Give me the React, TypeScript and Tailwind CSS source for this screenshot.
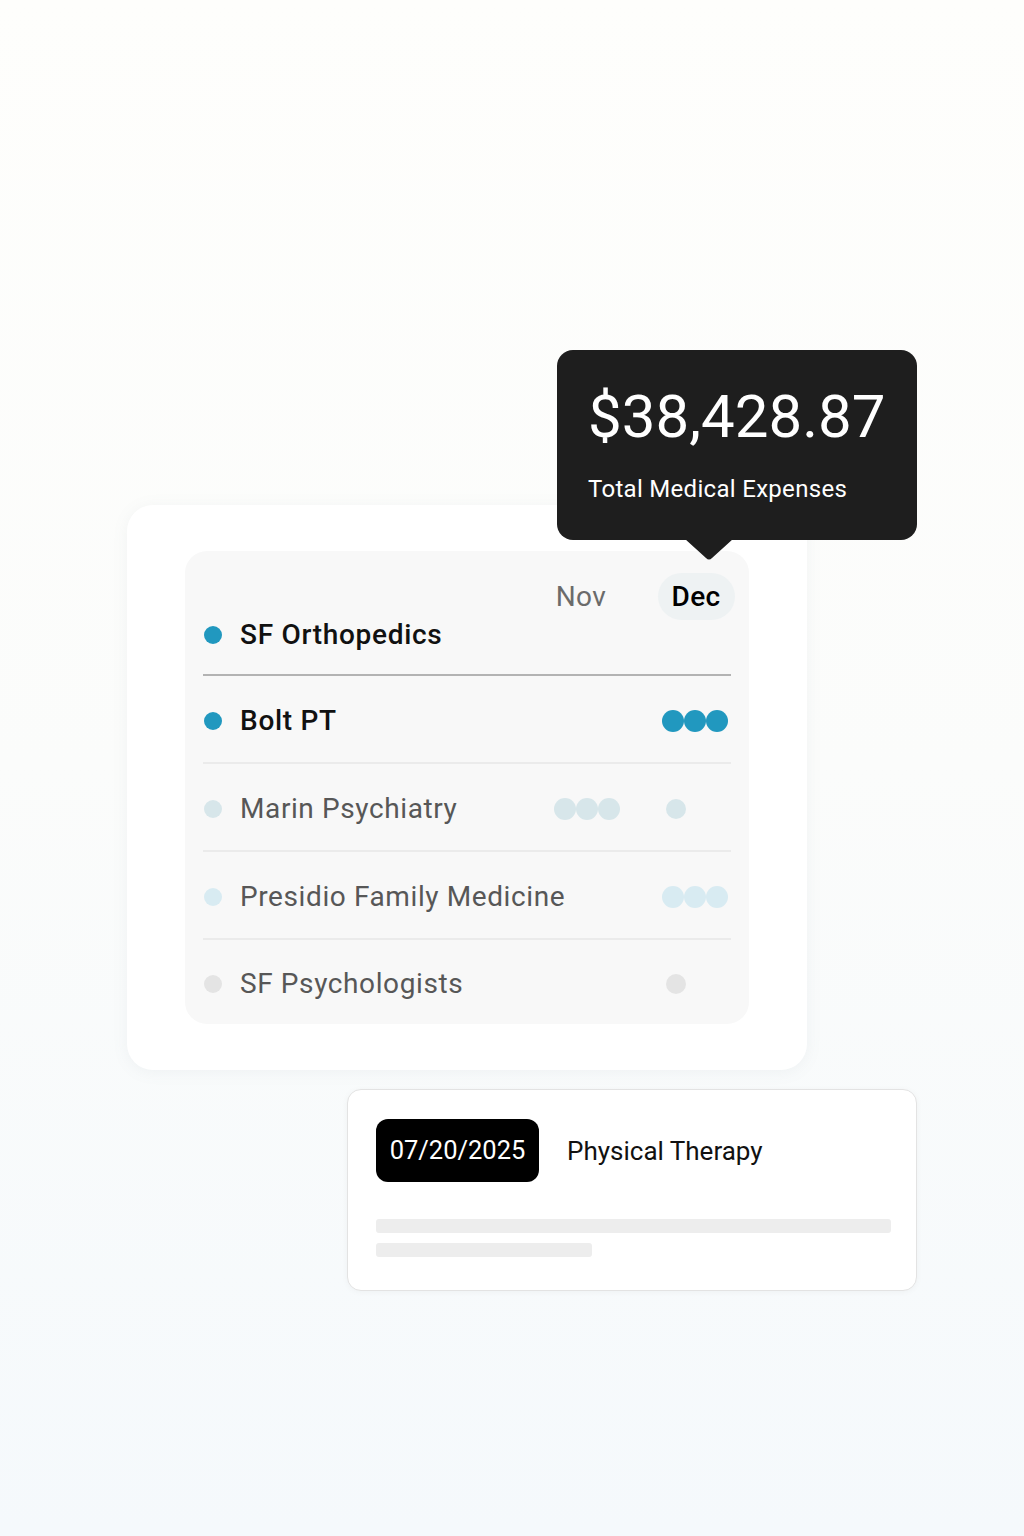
import React from "react";

const TEAL = "#2198bf";

function Dot({ color, size = 22, className = "" }: { color: string; size?: number; className?: string }) {
  return (
    <span
      className={`inline-block rounded-full shrink-0 ${className}`}
      style={{ width: size, height: size, background: color }}
    />
  );
}

function Triple({ color }: { color: string }) {
  return (
    <span className="flex">
      <Dot color={color} />
      <Dot color={color} />
      <Dot color={color} />
    </span>
  );
}

type Row = {
  name: string;
  dot: string;
  active: boolean;
  nov?: React.ReactNode;
  dec?: React.ReactNode;
};

export default function App() {
  const rows: Row[] = [
    { name: "Bolt PT", dot: TEAL, active: true, dec: <Triple color={TEAL} /> },
    {
      name: "Marin Psychiatry",
      dot: "#d7e6ea",
      active: false,
      nov: <Triple color="#d7e6ea" />,
      dec: <Dot color="#d7e6ea" size={20} className="ml-[4px]" />,
    },
    { name: "Presidio Family Medicine", dot: "#d8ebf2", active: false, dec: <Triple color="#d8ebf2" /> },
    {
      name: "SF Psychologists",
      dot: "#e4e4e4",
      active: false,
      dec: <Dot color="#e4e4e4" size={20} className="ml-[4px]" />,
    },
  ];

  return (
    <div
      className="min-h-[1536px] w-full bg-gradient-to-b from-[#fefefc] via-[#fbfcfb] to-[#f5f9fc] pt-[505px] pl-[127px]"
      style={{ fontFamily: "Roboto, 'Noto Sans', Arial, sans-serif" }}
    >
      {/* Main card */}
      <div className="relative w-[680px]">
        <div className="h-[565px] w-[680px] rounded-[26px] bg-white px-[58px] pt-[46px] shadow-[0_2px_16px_rgba(120,130,140,0.08)]">
          <div className="h-[473px] rounded-[22px] bg-[#f8f8f8] px-[18px] pt-[22px]">
            {/* header */}
            <div className="grid h-[47px] grid-cols-[1fr_70px_70px] items-center gap-x-[40px]">
              <div />
              <div className="whitespace-nowrap pr-[10px] text-center text-[28px] leading-none tracking-[0.4px] text-[#6b6b6b]">
                Nov
              </div>
              <div className="flex justify-center">
                <div className="flex h-[47px] w-[77px] shrink-0 items-center justify-center rounded-full bg-[#eef2f3] text-[28px] font-medium leading-none tracking-[0.4px] text-black">
                  Dec
                </div>
              </div>
            </div>
            {/* first row */}
            <div className="mb-[26px] flex h-[28px] items-center pt-[2px]">
              <Dot color={TEAL} size={18} className="ml-[1px]" />
              <span className="ml-[18px] whitespace-nowrap text-[28px] font-medium leading-none tracking-[0.7px] text-[#111]">
                SF Orthopedics
              </span>
            </div>
            {rows.map((r, i) => (
              <div
                key={r.name}
                className={`grid grid-cols-[1fr_70px_70px] items-center gap-x-[40px] border-t-2 pt-[4px] ${
                  i === 0 ? "border-[#b3b3b3]" : "border-[#ebebeb]"
                } ${i === rows.length - 1 ? "h-[86px]" : "h-[88px]"}`}
              >
                <div className="flex min-w-0 items-center">
                  <Dot color={r.dot} size={18} className="ml-[1px]" />
                  <span
                    className={`ml-[18px] whitespace-nowrap text-[28px] leading-none ${
                      r.active ? "font-medium tracking-[0.7px] text-[#111]" : "tracking-[0.6px] text-[#575757]"
                    }`}
                  >
                    {r.name}
                  </span>
                </div>
                <div className="flex items-center pl-[3px]">{r.nov}</div>
                <div className="flex items-center pl-[1px]">{r.dec}</div>
              </div>
            ))}
          </div>
        </div>

        {/* Tooltip */}
        <div className="absolute left-[430px] top-[-155px] h-[190px] w-[360px]">
          <div className="h-full w-full rounded-[16px] bg-[#1e1e1e] pl-[31px] pt-[37px]">
            <div className="whitespace-nowrap text-[60px] leading-none text-white">$38,428.87</div>
            <div className="mt-[30px] whitespace-nowrap text-[24px] leading-none tracking-[0.3px] text-white">
              Total Medical Expenses
            </div>
          </div>
          <svg
            className="absolute left-[128px] top-[189px]"
            width="48"
            height="22"
            viewBox="0 0 48 22"
          >
            <path d="M0 0 L48 0 L27 19 Q24 22 21 19 Z" fill="#1e1e1e" />
          </svg>
        </div>
      </div>

      {/* Bottom card */}
      <div className="ml-[220px] mt-[19px] h-[202px] w-[570px] rounded-[14px] border border-[#e3e3e3] bg-white pl-[28px] pr-[25px] pt-[29px] shadow-[0_1px_6px_rgba(0,0,0,0.04)]">
        <div className="flex items-center">
          <div className="flex h-[63px] w-[163px] items-center justify-center rounded-[12px] bg-black text-[25.5px] leading-none text-white">
            07/20/2025
          </div>
          <div className="ml-[28px] whitespace-nowrap text-[26px] leading-none text-[#111]">Physical Therapy</div>
        </div>
        <div className="mt-[37px] h-[14px] w-[515px] rounded-[3px] bg-[#ededed]" />
        <div className="mt-[10px] h-[14px] w-[216px] rounded-[3px] bg-[#ededed]" />
      </div>
    </div>
  );
}
